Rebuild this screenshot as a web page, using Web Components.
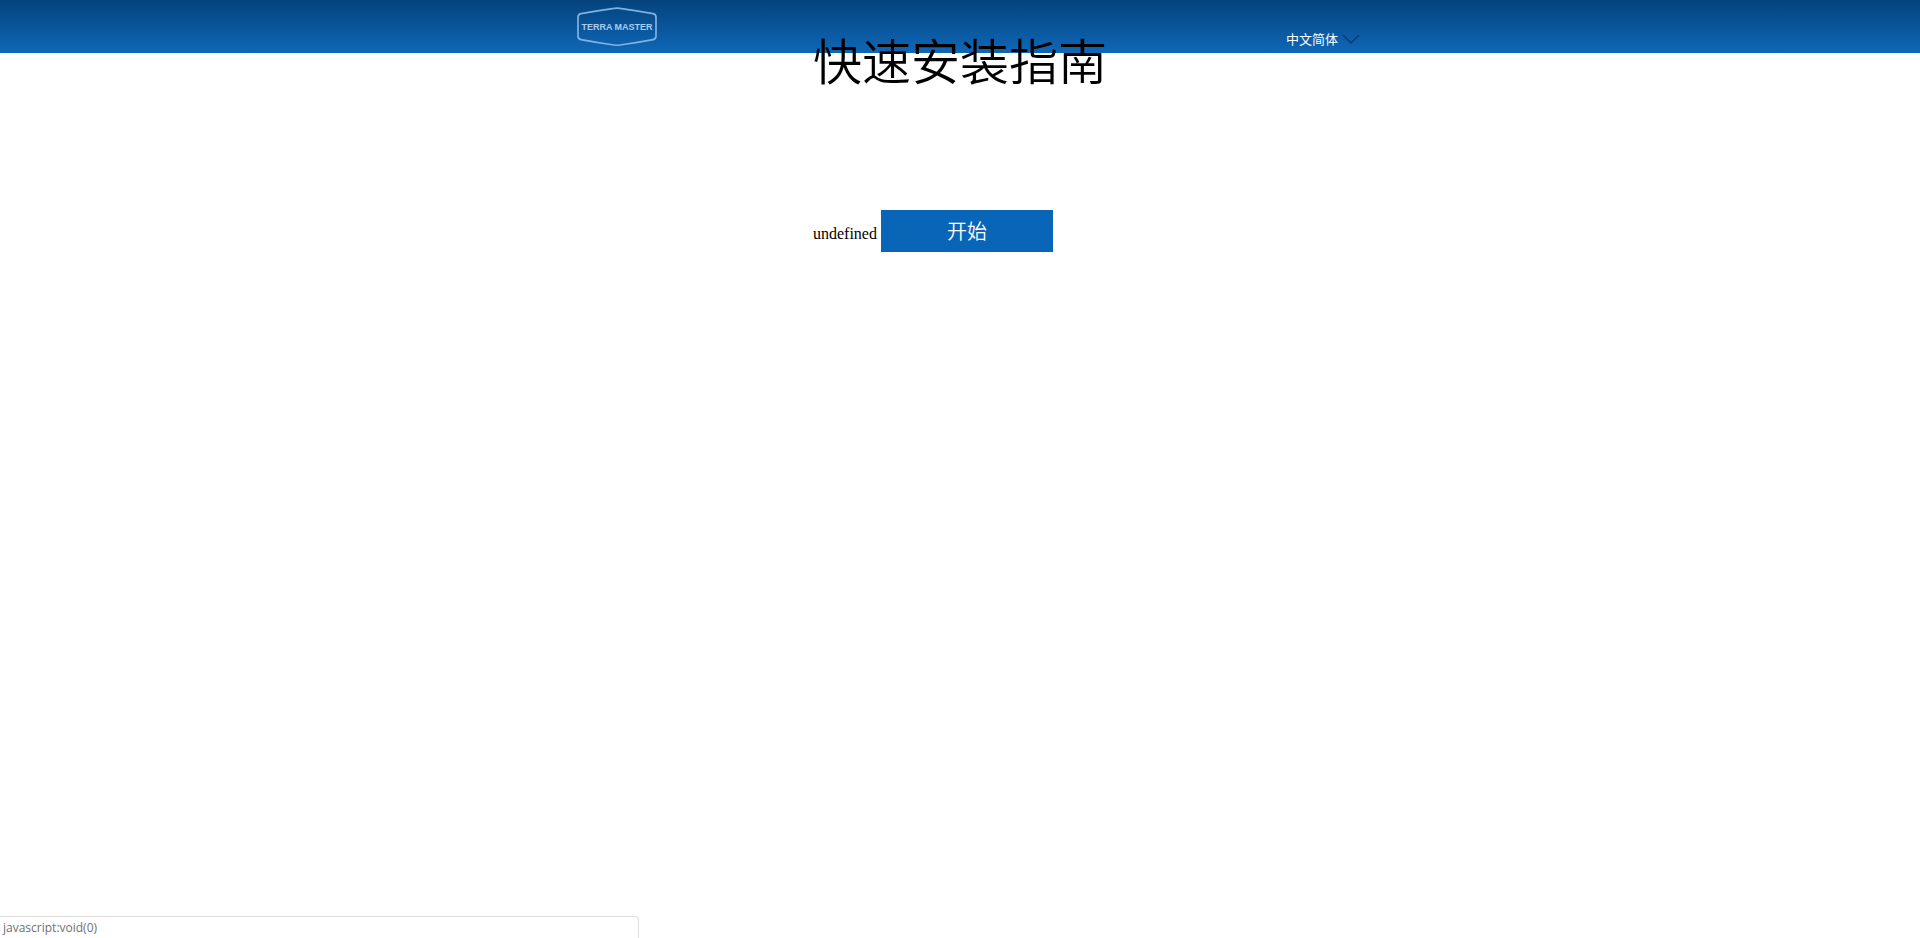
<!DOCTYPE html>
<html lang="zh-CN">
<head>
<meta charset="utf-8">
<title>快速安装指南</title>
<style>
html, body { height: 100%; }
body { margin: 0; background: #fff; color: #000; font: 16px "Liberation Serif", "Noto Sans CJK SC", serif; }
</style>
</head>
<body>
<guide-page></guide-page>
<script>
const define = (name, html) => customElements.define(name, class extends HTMLElement {
  constructor() {
    super();
    this.attachShadow({ mode: 'open' }).innerHTML = html;
  }
});

define('brand-logo', `
<style>
:host { display: block; width: 82px; height: 40px; }
svg { display: block; }
text { font: bold 9px "Liberation Sans", sans-serif; fill: #a6cdf0; text-anchor: middle; }
</style>
<svg width="82" height="40" viewBox="0 0 82 40" role="img" aria-label="TERRA MASTER">
  <path d="M5 6.6Q22 3.6 38 1.3Q41 .8 44 1.3Q60 3.6 77 6.6Q80 7.2 80 10V29Q80 32 77 32.6Q60 35.8 44 38Q41 38.5 38 38Q22 35.8 5 32.6Q2 32 2 29V10Q2 7.2 5 6.6Z" fill="none" stroke="#7fb2e2" stroke-width="1.7"/>
  <text x="41" y="23">TERRA MASTER</text>
</svg>`);

define('language-menu', `
<style>
:host { display: block; }
button { display: flex; align-items: center; gap: 4px; margin: 0; padding: 0; border: 0; background: none; color: #fff; font: 13px/20px "Noto Sans CJK SC", sans-serif; cursor: pointer; }
svg { display: block; }
</style>
<button type="button" aria-haspopup="listbox"><slot></slot>
  <svg width="18" height="10" viewBox="0 0 18 10" aria-hidden="true"><path d="M1 1L9 9L17 1" fill="none" stroke="#083c73" stroke-width="1.5"/></svg>
</button>`);

define('top-bar', `
<style>
:host { display: block; background: linear-gradient(#04437c, #0f67b8); }
.inner { display: flex; justify-content: space-between; align-items: flex-end; width: 800px; max-width: 100%; height: 53px; margin: 0 auto; padding: 0 0 4px 16px; box-sizing: border-box; }
brand-logo { margin-bottom: 2px; }
</style>
<header class="inner"><brand-logo></brand-logo><language-menu>中文简体</language-menu></header>`);

define('start-link', `
<style>
:host { display: inline-block; }
button { width: 172px; height: 42px; margin: 0; padding: 0 0 2px; border: 0; background: #0865b8; color: #fff; font: 350 20px "Noto Sans CJK SC", sans-serif; cursor: pointer; }
</style>
<button type="button"><slot></slot></button>`);

define('guide-intro', `
<style>
:host { display: block; width: fit-content; margin: -27px auto 0; }
h1 { margin: 0 0 118px; font: 350 49px/66px "Noto Sans CJK SC", serif; }
p { margin: 0; }
</style>
<h1><slot name="title"></slot></h1>
<p><slot></slot></p>`);

define('link-status', `
<style>
:host { display: block; width: 33.3%; height: 22px; padding: 0 3px; box-sizing: border-box; border: 1px solid #ddd; border-width: 1px 1px 0 0; border-radius: 0 4px 0 0; color: #707070; font: 12px/22px "Open Sans", sans-serif; }
</style>
<slot></slot>`);

define('guide-page', `
<style>
:host { display: flex; flex-direction: column; min-height: 100%; }
main { flex: 1; }
</style>
<top-bar></top-bar>
<main><guide-intro><span slot="title">快速安装指南</span>undefined <start-link>开始</start-link></guide-intro></main>
<link-status>javascript:void(0)</link-status>`);
</script>
</body>
</html>
